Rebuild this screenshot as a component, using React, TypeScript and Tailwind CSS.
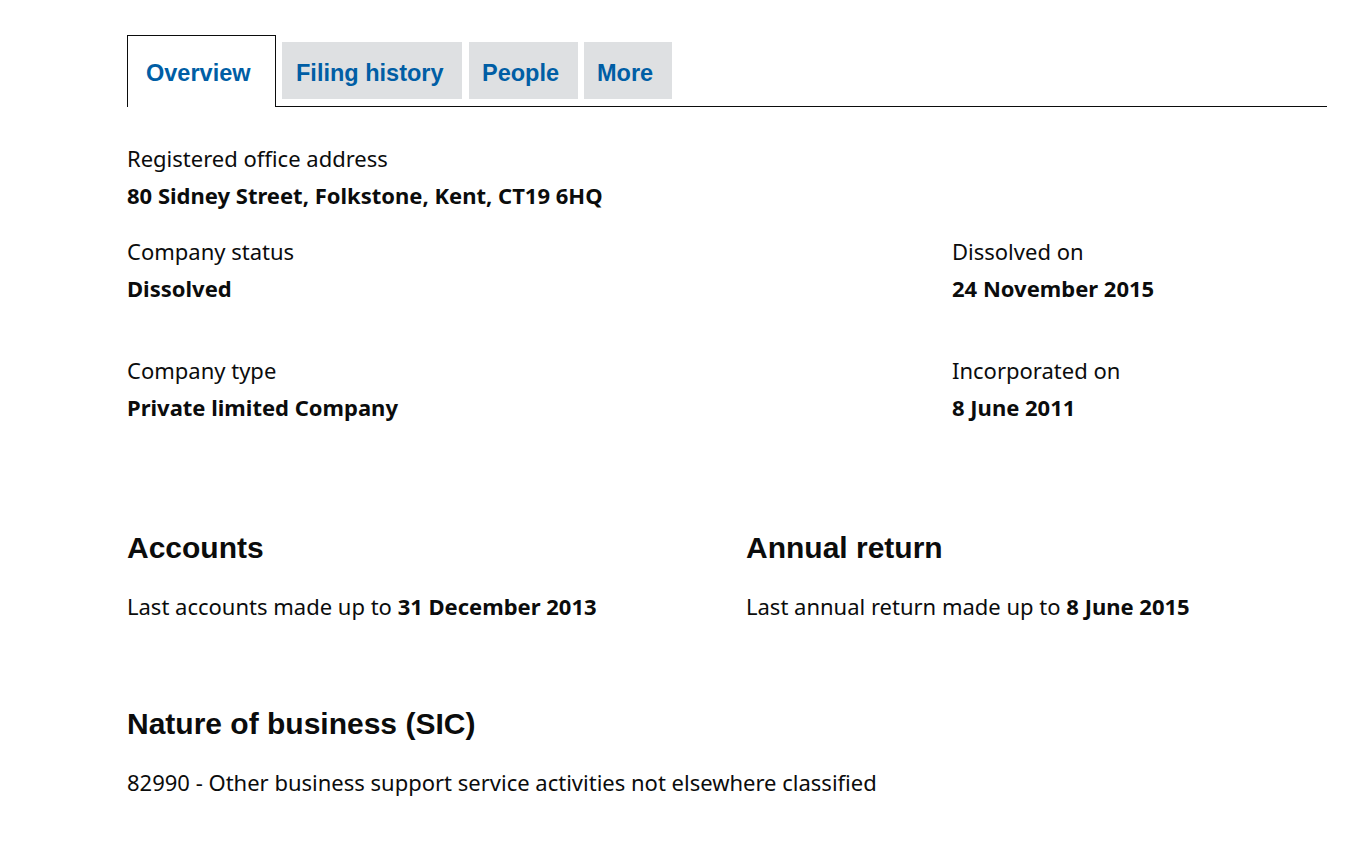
import React from 'react'

const body = "font-['Noto_Sans',sans-serif] text-[22px] leading-[25px] text-[#0b0c0c]"
const heading = "font-['Liberation_Sans',Arial,sans-serif] text-[30px] leading-[37px] font-bold text-[#0b0c0c]"

function Field({ label, value }: { label: string; value: string }) {
  return (
    <div>
      <div className={body}>{label}</div>
      <div className={`${body} mt-3 font-bold`}>{value}</div>
    </div>
  )
}

const tabs = [
  { label: 'Filing history', cls: 'ml-[6px] w-[180px] pl-[14px]' },
  { label: 'People', cls: 'ml-[7px] w-[109px] pl-[13px]' },
  { label: 'More', cls: 'ml-[6px] w-[88px] pl-[13px]' },
]

export default function App() {
  return (
    <main className="min-h-screen bg-white">
      <div className="ml-[127px] w-[1200px] pt-[35px]">
        {/* tabs */}
        <nav className="flex items-end border-b border-[#0b0c0c] font-['Liberation_Sans',Arial,sans-serif]">
          <a className="-mb-px flex h-[72px] w-[149px] items-center border border-b-0 border-[#0b0c0c] bg-white pl-[18px] pt-[4px] text-[23.5px] font-bold text-[#005ea5]">
            Overview
          </a>
          {tabs.map((t) => (
            <a
              key={t.label}
              className={`${t.cls} mb-[7px] flex h-[57px] items-center bg-[#dee0e2] pt-[7px] text-[23.5px] font-bold text-[#005ea5]`}
            >
              {t.label}
            </a>
          ))}
        </nav>

        {/* registered office */}
        <section className="mt-[39px]">
          <Field label="Registered office address" value="80 Sidney Street, Folkstone, Kent, CT19 6HQ" />
        </section>

        <section className="mt-[31px] grid grid-cols-[825px_1fr] gap-y-[57px]">
          <Field label="Company status" value="Dissolved" />
          <Field label="Dissolved on" value="24 November 2015" />
          <Field label="Company type" value="Private limited Company" />
          <Field label="Incorporated on" value="8 June 2011" />
        </section>

        <section className="mt-[109px] grid grid-cols-[619px_1fr]">
          <div>
            <h2 className={heading}>Accounts</h2>
            <p className={`${body} mt-[28px]`}>
              Last accounts made up to <strong>31 December 2013</strong>
            </p>
          </div>
          <div>
            <h2 className={heading}>Annual return</h2>
            <p className={`${body} mt-[28px]`}>
              Last annual return made up to <strong>8 June 2015</strong>
            </p>
          </div>
        </section>

        <section className="mt-[86px]">
          <h2 className={heading}>Nature of business (SIC)</h2>
          <p className={`${body} mt-[28px]`}>
            82990 - Other business support service activities not elsewhere classified
          </p>
        </section>
      </div>
    </main>
  )
}
